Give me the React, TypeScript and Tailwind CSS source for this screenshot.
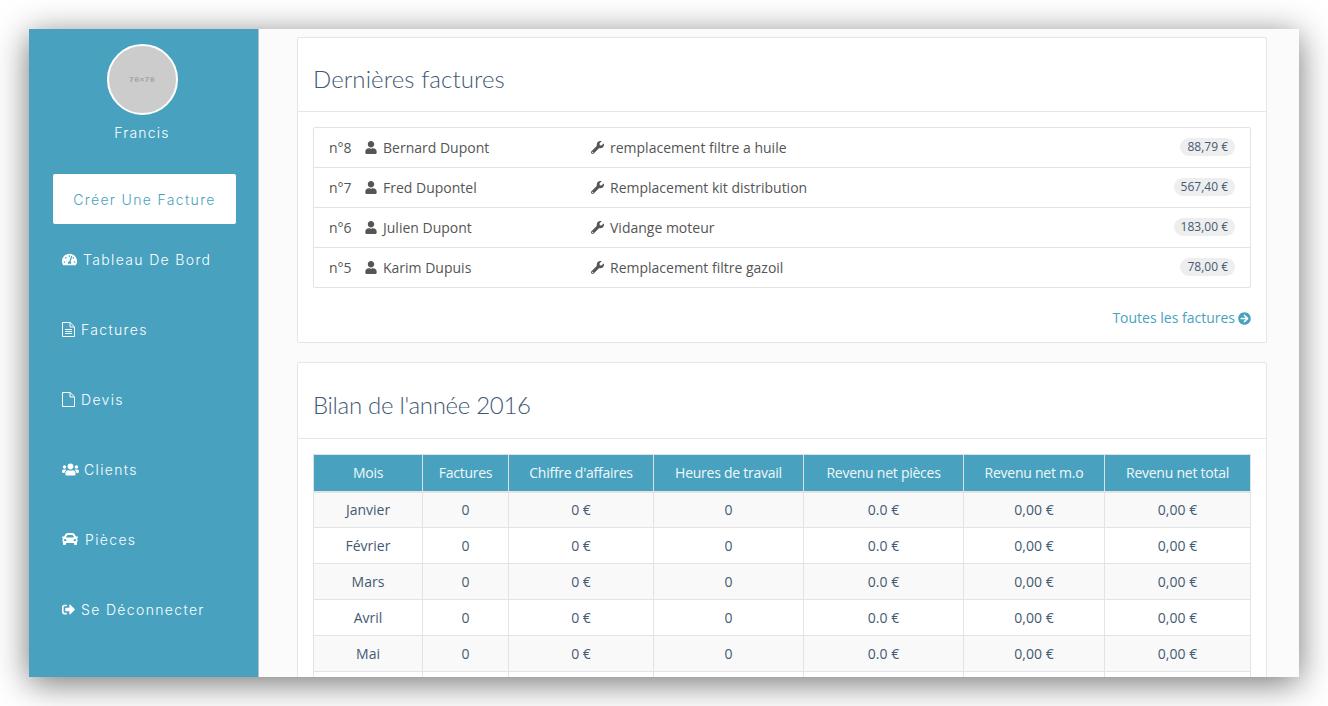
import React from 'react';
import { FaArrowCircleRight, FaCar, FaSignOutAlt, FaTachometerAlt, FaUser, FaUsers, FaWrench } from 'react-icons/fa';

// thin outline like the FA4 file icons
const FileText = ({ className }: { className?: string }) => (
  <svg viewBox="0 0 13 15" fill="none" stroke="currentColor" strokeWidth="1" className={className}>
    <path d="M.5.5h7.6l4.4 4.4v9.6H.5z" />
    <path d="M8 .5v4.5h4.5M3 7.5h7M3 9.5h7M3 11.5h7" />
  </svg>
);

const FileEmpty = ({ className }: { className?: string }) => (
  <svg viewBox="0 0 13 15" fill="none" stroke="currentColor" strokeWidth="1" className={className}>
    <path d="M.5.5h7.6l4.4 4.4v9.6H.5z" />
    <path d="M8 .5v4.5h4.5" />
  </svg>
);

const nav = [
  { icon: FaTachometerAlt, label: 'Tableau De Bord', size: 'w-[15px] h-[15px]', gap: 'ml-[6px]' },
  { icon: FileText, label: 'Factures', size: 'w-[13px] h-[15px]', gap: 'ml-[6px]' },
  { icon: FileEmpty, label: 'Devis', size: 'w-[13px] h-[15px]', gap: 'ml-[6px]' },
  { icon: FaUsers, label: 'Clients', size: 'w-[17px] h-[15px]', gap: 'ml-[5px]' },
  { icon: FaCar, label: 'Pièces', size: 'w-[16px] h-[16px]', gap: 'ml-[7px]' },
  { icon: FaSignOutAlt, label: 'Se Déconnecter', size: 'w-[13px] h-[13px]', gap: 'ml-[6px]' },
];

const invoices = [
  { num: 'n°8', client: 'Bernard Dupont', job: 'remplacement filtre a huile', price: '88,79 €' },
  { num: 'n°7', client: 'Fred Dupontel', job: 'Remplacement kit distribution', price: '567,40 €' },
  { num: 'n°6', client: 'Julien Dupont', job: 'Vidange moteur', price: '183,00 €' },
  { num: 'n°5', client: 'Karim Dupuis', job: 'Remplacement filtre gazoil', price: '78,00 €' },
];

const columns = [
  { label: 'Mois', width: 'w-[109px]' },
  { label: 'Factures', width: 'w-[86px]' },
  { label: "Chiffre d'affaires", width: 'w-[145px]' },
  { label: 'Heures de travail', width: 'w-[150px]' },
  { label: 'Revenu net pièces', width: 'w-[160px]' },
  { label: 'Revenu net m.o', width: 'w-[141px]' },
  { label: 'Revenu net total', width: 'w-[146px]' },
];

const months = ['Janvier', 'Février', 'Mars', 'Avril', 'Mai', 'Juin'];

const App = () => {
  return (
    <div className="w-[1328px] h-[706px] bg-white overflow-hidden pt-[29px] pl-[29px] font-['Open_Sans',sans-serif]">
      <div className="w-[1270px] h-[648px] flex overflow-hidden bg-[#fbfbfb] shadow-[0_6px_32px_rgba(0,0,0,0.55)]">
        <aside className="w-[230px] shrink-0 bg-[#48a2bf] border-r border-[#b5c3c8] font-['Inter',sans-serif] font-light text-white">
          <div className="flex flex-col items-center pt-[15px] pr-[3px]">
            <div className="w-[71px] h-[71px] rounded-full bg-[#cccccc] border-2 border-white flex items-center justify-center">
              <span className="text-[8px] tracking-[0.4px] text-[#a3a3a3] font-['Liberation_Mono',monospace] font-bold">70×70</span>
            </div>
            <div className="mt-[8px] text-[14px] leading-[20px] tracking-[1.2px]">Francis</div>
          </div>
          <div className="mt-[31px] ml-[24px] w-[183px] h-[50px] bg-white rounded-[2px] flex items-center justify-center text-[#48a2bf] text-[14px] tracking-[1.35px]">
            Créer Une Facture
          </div>
          <nav className="pl-[33px]">
            {nav.map((item) => (
              <div key={item.label} className="h-[70px] flex items-center text-[14px] tracking-[1.35px]">
                <item.icon className={item.size} />
                <span className={item.gap}>{item.label}</span>
              </div>
            ))}
          </nav>
        </aside>

        <main className="flex-1 pt-[8px] pl-[38px] text-[#555555]">
          <section className="w-[970px] h-[306px] bg-white border border-[#e6e6e6] rounded-[2px]">
            <div className="h-[74px] border-b border-[#e6e6e6] pl-[15px] pt-[23px]">
              <h2 className="text-[24px] leading-[36px] font-light tracking-[0.1px] text-[#3f5874] font-['Lato',sans-serif]">Dernières factures</h2>
            </div>
            <ul className="mt-[15px] ml-[15px] w-[938px] border border-[#e3e3e3] rounded-[2px]">
              {invoices.map((row, i) => (
                <li key={row.num} className={`flex items-center pl-[15px] pr-[15px] text-[14px] ${i > 0 ? 'h-[40px] border-t border-[#e3e3e3]' : 'h-[39px]'}`}>
                  <span className="w-[36px] shrink-0">{row.num}</span>
                  <span className="w-[226px] shrink-0 flex items-center">
                    <FaUser className="w-[12px] h-[13px] text-[#555555]" />
                    <span className="ml-[6px]">{row.client}</span>
                  </span>
                  <FaWrench className="w-[13px] h-[13px] text-[#555555]" />
                  <span className="ml-[6px]">{row.job}</span>
                  <span className="ml-auto h-[18px] px-[7px] rounded-full bg-[#eeeeee] text-[12px] leading-[18px] text-[#445a72] -translate-y-px">{row.price}</span>
                </li>
              ))}
            </ul>
            <div className="mt-[20px] pr-[15px] flex items-center justify-end text-[14px] leading-[20px] text-[#48a2bf]">
              Toutes les factures
              <FaArrowCircleRight className="ml-[3px] w-[13px] h-[13px]" />
            </div>
          </section>

          <section className="mt-[19px] w-[970px] bg-white border border-[#e6e6e6] rounded-[2px]">
            <div className="h-[76px] border-b border-[#e6e6e6] pl-[15px] pt-[24px]">
              <h2 className="text-[24px] leading-[36px] font-light tracking-[-0.3px] text-[#3f5874] font-['Lato',sans-serif]">Bilan de l'année 2016</h2>
            </div>
            <table className="mt-[15px] ml-[15px] w-[937px] table-fixed border-collapse text-[14px] text-center">
              <thead>
                <tr className="h-[37px] bg-[#48a2bf] text-[#f0f8fa]">
                  {columns.map((col) => (
                    <th key={col.label} className={`${col.width} font-normal tracking-[-0.25px] border border-[#d9e2e5] border-b-2 border-b-[#e3e3e3]`}>{col.label}</th>
                  ))}
                </tr>
              </thead>
              <tbody>
                {months.map((month, i) => (
                  <tr key={month} className={`h-[36px] text-[#445a72] ${i % 2 === 0 ? 'bg-[#f9f9f9]' : 'bg-white'}`}>
                    <td className="border border-[#e3e3e3]">{month}</td>
                    <td className="border border-[#e3e3e3]">0</td>
                    <td className="border border-[#e3e3e3]">0 €</td>
                    <td className="border border-[#e3e3e3]">0</td>
                    <td className="border border-[#e3e3e3]">0.0 €</td>
                    <td className="border border-[#e3e3e3]">0,00 €</td>
                    <td className="border border-[#e3e3e3]">0,00 €</td>
                  </tr>
                ))}
              </tbody>
            </table>
          </section>
        </main>
      </div>
    </div>
  );
};

export default App;
